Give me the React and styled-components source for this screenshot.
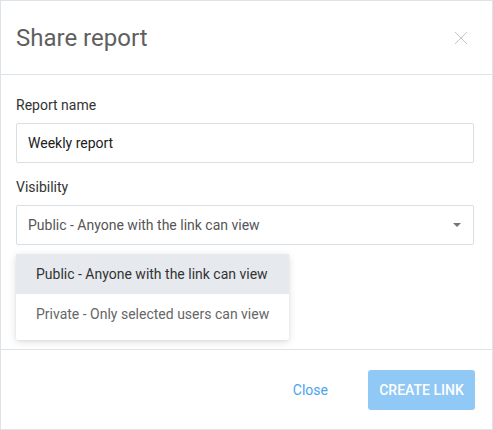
import styled, { createGlobalStyle } from 'styled-components'

const Global = createGlobalStyle`
  html, body {
    margin: 0;
    padding: 0;
    background: #fff;
    font-family: Roboto, "Liberation Sans", sans-serif;
  }
  * { box-sizing: border-box; }
`

const Dialog = styled.div`
  width: 493px;
  height: 430px;
  border: 1px solid #dde3e8;
  display: flex;
  flex-direction: column;
  background: #fff;
`

const Header = styled.div`
  height: 74px;
  flex: none;
  display: flex;
  align-items: center;
  justify-content: space-between;
  padding: 0 24px 0 15px;
  border-bottom: 1px solid #dde3e8;
`

const Title = styled.h2`
  margin: 0;
  font-size: 24px;
  font-weight: 400;
  color: #5f5f5f;
`

const CloseIcon = styled.button`
  border: 0;
  background: none;
  padding: 0;
  width: 14px;
  height: 14px;
  display: flex;
  cursor: pointer;
`

const Body = styled.div`
  flex: 1;
  position: relative;
  padding: 20px 18px 0 15px;
  display: flex;
  flex-direction: column;
`

const Label = styled.div`
  font-size: 14px;
  line-height: 20px;
  color: #333;
  margin-bottom: 8px;
  margin-top: ${p => (p.$first ? '0' : '14px')};
`

const Field = styled.div`
  height: 40px;
  border: 1px solid #d9dee3;
  border-radius: 2px;
  display: flex;
  align-items: center;
  justify-content: space-between;
  padding: 0 12px 0 11px;
  font-size: 14px;
  color: ${p => p.$muted ? '#555' : '#212121'};
`

const Caret = styled.span`
  width: 0;
  height: 0;
  border-left: 4px solid transparent;
  border-right: 4px solid transparent;
  border-top: 4px solid #757575;
`

const Menu = styled.ul`
  position: absolute;
  left: 15px;
  top: 179px;
  width: 273px;
  margin: 0;
  padding: 0 0 6px;
  list-style: none;
  background: #fff;
  border-radius: 2px;
  box-shadow: 0 2px 8px rgba(0, 0, 0, 0.12), 0 1px 3px rgba(0, 0, 0, 0.06);
`

const Item = styled.li`
  height: 40px;
  display: flex;
  align-items: center;
  padding-left: 20px;
  font-size: 14px;
  color: ${p => (p.$active ? '#333' : '#666')};
  background: ${p => (p.$active ? '#e6eaee' : '#fff')};
`

const Footer = styled.div`
  height: 80px;
  flex: none;
  border-top: 1px solid #dde3e8;
  display: flex;
  align-items: center;
  justify-content: flex-end;
  gap: 24px;
  padding-right: 17px;
`

const TextButton = styled.button`
  border: 0;
  background: none;
  height: 40px;
  padding: 0 16px;
  font-family: inherit;
  font-size: 14px;
  color: #4aa3ee;
  cursor: pointer;
`

const PrimaryButton = styled.button`
  border: 0;
  height: 40px;
  width: 107px;
  border-radius: 3px;
  background: #90c8f6;
  color: #fff;
  font-family: inherit;
  font-size: 14px;
  font-weight: 500;
  text-transform: uppercase;
`

export default function App() {
  return (
    <>
      <Global />
      <Dialog>
        <Header>
          <Title>Share report</Title>
          <CloseIcon aria-label="close">
            <svg width="14" height="14" viewBox="0 0 14 14">
              <path d="M1 1L13 13M13 1L1 13" stroke="#c4c4c4" strokeWidth="1" fill="none" />
            </svg>
          </CloseIcon>
        </Header>
        <Body>
          <Label $first>Report name</Label>
          <Field>Weekly report</Field>
          <Label>Visibility</Label>
          <Field $muted>
            Public - Anyone with the link can view
            <Caret />
          </Field>
          <Menu>
            <Item $active>Public - Anyone with the link can view</Item>
            <Item>Private - Only selected users can view</Item>
          </Menu>
        </Body>
        <Footer>
          <TextButton>Close</TextButton>
          <PrimaryButton>Create link</PrimaryButton>
        </Footer>
      </Dialog>
    </>
  )
}
